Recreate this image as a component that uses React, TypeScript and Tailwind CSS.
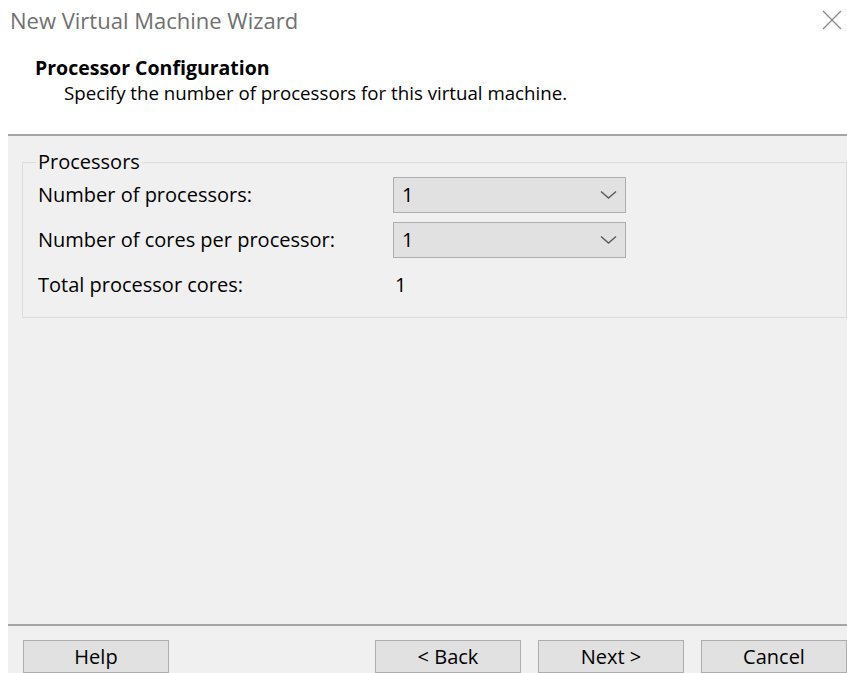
import React from "react";

const rows = [
  { label: "Number of processors:", value: "1", select: true },
  { label: "Number of cores per processor:", value: "1", select: true },
  { label: "Total processor cores:", value: "1", select: false },
];

const buttons = [
  { label: "< Back", className: "ml-auto" },
  { label: "Next >", className: "ml-[17px]" },
  { label: "Cancel", className: "ml-[17px]" },
];

function Chevron() {
  return (
    <svg width="17" height="10" viewBox="0 0 17 10" fill="none">
      <path d="M1 1.5 L8.5 8 L16 1.5" stroke="#5a5a5a" strokeWidth="1.4" />
    </svg>
  );
}

function Select({ value }: { value: string }) {
  return (
    <div className="flex h-[36px] w-[233px] items-center justify-between border border-[#adadad] bg-[#e1e1e1] pl-[8px] pr-[8px]">
      <span>{value}</span>
      <Chevron />
    </div>
  );
}

export default function App() {
  return (
    <div className="flex h-[673px] w-[847px] flex-col overflow-hidden bg-white font-['Open_Sans',sans-serif] text-[20px] text-black">
      <header className="h-[134px] shrink-0">
        <div className="flex h-[40px] items-center justify-between pl-[10px] pr-[4px]">
          <span className="text-[22px] text-[#707070]">New Virtual Machine Wizard</span>
          <svg width="22" height="22" viewBox="0 0 22 22">
            <path d="M2 2 L20 20 M20 2 L2 20" stroke="#8a8a8a" strokeWidth="1.3" />
          </svg>
        </div>
        <h1 className="mt-[15px] pl-[35px] text-[19.5px] font-bold leading-[26px]">Processor Configuration</h1>
        <p className="pl-[64px] text-[18.7px] leading-[24px]">Specify the number of processors for this virtual machine.</p>
      </header>

      <main className="ml-[8px] flex flex-1 flex-col border-t-2 border-[#a5a5a5] bg-[#f0f0f0]">
        <fieldset className="ml-[14px] mt-[14px] border border-[#dcdcdc] pb-[14px] pl-[15px]">
          <legend className="-ml-[2px] px-[2px] leading-[24px]">Processors</legend>
          <div className="mt-[3px] flex flex-col gap-[9px]">
            {rows.map((r) => (
              <div key={r.label} className="flex h-[36px] items-center">
                <span className="w-[355px] shrink-0">{r.label}</span>
                {r.select ? <Select value={r.value} /> : <span className="pl-[2px]">{r.value}</span>}
              </div>
            ))}
          </div>
        </fieldset>

        <div className="mt-auto border-t-2 border-[#a5a5a5]" />
        <div className="flex pl-[15px] pt-[14px]">
          <button className="h-[33px] w-[146px] border border-[#adadad] bg-[#e1e1e1]">Help</button>
          {buttons.map((b) => (
            <button
              key={b.label}
              className={`h-[33px] w-[146px] border border-[#adadad] bg-[#e1e1e1] ${b.className}`}
            >
              {b.label}
            </button>
          ))}
        </div>
      </main>
    </div>
  );
}
